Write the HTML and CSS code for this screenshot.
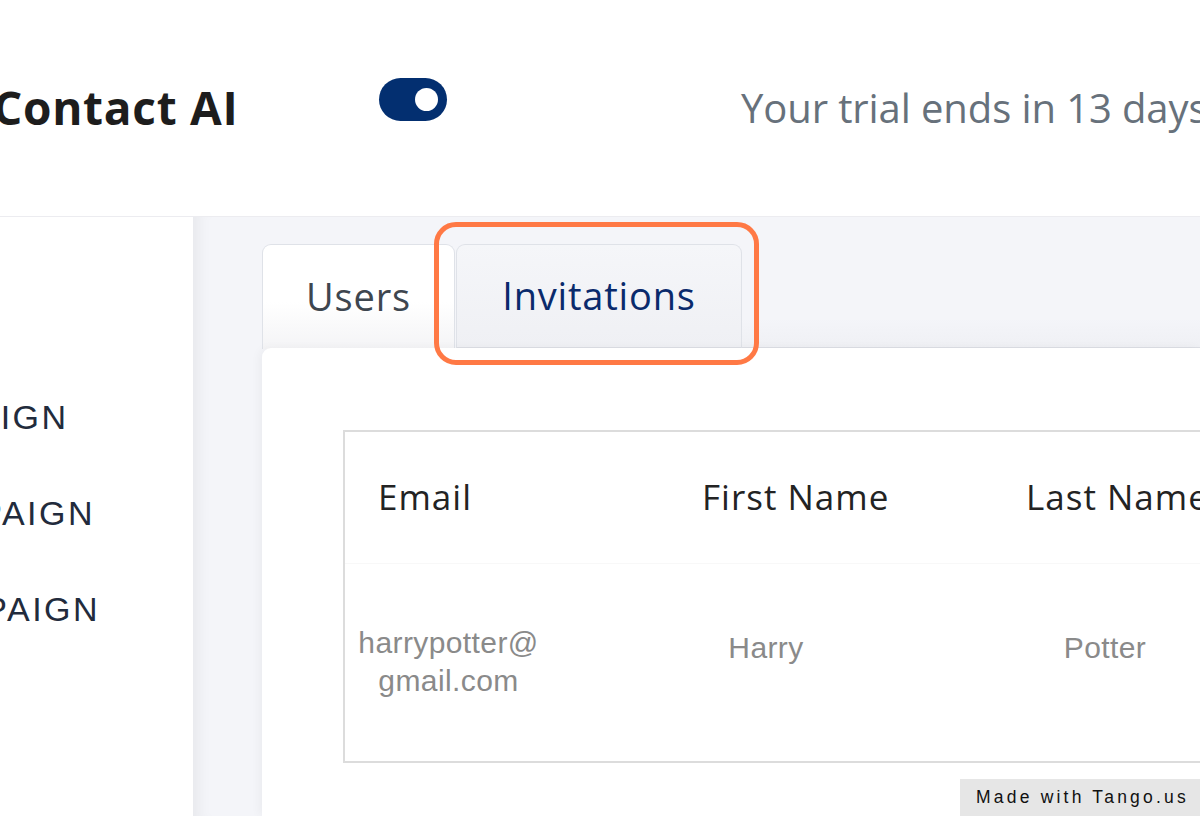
FILE: index.html
```html
<!DOCTYPE html>
<html lang="en">
<head>
<meta charset="utf-8">
<title>Contact AI - Invitations</title>
<link rel="stylesheet" href="styles.css">
</head>
<body>
<div class="page">
  <header class="topbar">
    <div class="brand">Contact AI</div>
    <div class="toggle"><span class="knob"></span></div>
    <div class="trial">Your trial ends in 13 days</div>
  </header>
  <div class="layout">
    <aside class="sidebar">
      <nav class="nav">
        <a class="nav-item">NEW CAMPAIGN</a>
        <a class="nav-item">EMAIL CAMPAIGN</a>
        <a class="nav-item">VOICE CAMPAIGN</a>
      </nav>
    </aside>
    <main class="main">
      <div class="tabs">
        <div class="tab tab-users">Users</div>
        <div class="tab tab-invitations">Invitations</div>
        <div class="tab-fill"></div>
      </div>
      <section class="card">
        <div class="table">
          <div class="thead">
            <div class="th">Email</div>
            <div class="th">First Name</div>
            <div class="th">Last Name</div>
          </div>
          <div class="trow">
            <div class="td td-email">harrypotter@<br>gmail.com</div>
            <div class="td td-name">Harry</div>
            <div class="td td-name">Potter</div>
          </div>
        </div>
      </section>
    </main>
  </div>
  <div class="highlight"></div>
  <div class="tango">Made with Tango.us</div>
</div>
</body>
</html>
```

FILE: styles.css
```css
* { box-sizing: border-box; }
html, body { margin: 0; padding: 0; }
body {
  width: 1200px;
  height: 816px;
  overflow: hidden;
  background: #ffffff;
  font-family: "Open Sans", "Liberation Sans", sans-serif;
}
.page {
  position: relative;
  width: 1200px;
  height: 816px;
  overflow: hidden;
  display: flex;
  flex-direction: column;
}
.topbar {
  height: 217px;
  flex: 0 0 217px;
  border-bottom: 1px solid #ececf0;
  display: flex;
  align-items: center;
  white-space: nowrap;
  padding-bottom: 2px;
}
.brand {
  flex: none;
  margin-left: -7px;
  width: 386px;
  font-size: 46px;
  font-weight: 700;
  color: #1d1d1d;
  letter-spacing: 0.7px;
}
.toggle {
  flex: none;
  width: 68px;
  height: 43px;
  border-radius: 22px;
  background: #032f70;
  display: flex;
  align-items: center;
  justify-content: flex-end;
  padding-right: 9px;
  margin-bottom: 16px;
}
.knob {
  width: 23px;
  height: 23px;
  border-radius: 50%;
  background: #ffffff;
}
.trial {
  flex: none;
  margin-left: 294px;
  font-size: 40px;
  color: #67717b;
  letter-spacing: -0.1px;
}
.layout {
  flex: 1;
  display: flex;
  min-height: 0;
}
.sidebar {
  width: 193px;
  flex: 0 0 193px;
  background: #ffffff;
  overflow: hidden;
  position: relative;
}
.nav {
  display: flex;
  flex-direction: column;
  gap: 60px;
  margin-left: -229px;
  padding-top: 182px;
  width: 440px;
}
.nav-item {
  display: block;
  white-space: nowrap;
  font-family: "Liberation Sans", Arial, sans-serif;
  font-size: 34px;
  line-height: 36px;
  letter-spacing: 2.5px;
  color: #222b3c;
}
.main {
  flex: 1;
  background: #f4f5f9;
  box-shadow: inset 16px 0 14px -10px rgba(0, 0, 0, 0.05);
  padding: 27px 0 0 69px;
  display: flex;
  flex-direction: column;
  min-width: 0;
}
.tabs {
  display: flex;
  align-items: flex-end;
  height: 105px;
  flex: 0 0 105px;
}
.tab {
  flex: none;
  height: 105px;
  display: flex;
  align-items: center;
  justify-content: center;
  font-size: 38px;
  letter-spacing: 0.8px;
  border: 1px solid #dfe2e8;
  border-radius: 9px 9px 0 0;
  padding-bottom: 2px;
}
.tab-users {
  width: 193px;
  color: #3e464f;
  background: linear-gradient(#ffffff 0%, #ffffff 55%, #f4f4f6 100%);
  border-bottom: none;
}
.tab-invitations {
  width: 286px;
  margin-left: 1px;
  color: #0a2a6c;
  background: linear-gradient(#f5f6f9, #eff0f4);
  border-bottom: 2px solid #dcdee4;
}
.tab-fill {
  flex: 1;
  height: 30px;
  background: linear-gradient(#f4f5f9, #eff0f4);
  border-bottom: 2px solid #dcdee4;
}
.card {
  flex: 1;
  background: #ffffff;
  border-radius: 9px 0 0 0;
  box-shadow: -3px 0 10px rgba(0, 0, 0, 0.04);
  padding: 82px 0 0 81px;
  margin-top: -1px;
}
.table {
  width: 1000px;
  height: 333px;
  border: 2px solid #dcdcdc;
  border-right: none;
  display: flex;
  flex-direction: column;
}
.thead {
  height: 132px;
  display: grid;
  grid-template-columns: 324px 324px 324px;
  align-items: center;
  padding-left: 33px;
  border-bottom: 1px solid #f8f8f8;
}
.th {
  font-size: 35px;
  letter-spacing: 1px;
  color: #232323;
  padding-bottom: 2px;
  white-space: nowrap;
}
.trow {
  flex: 1;
  display: grid;
  grid-template-columns: 207px 428px 250px;
}
.td {
  font-family: "Liberation Sans", Arial, sans-serif;
  font-size: 30px;
  letter-spacing: 0.4px;
  line-height: 38px;
  color: #8a8a8a;
  text-align: center;
}
.td-email { padding-top: 60px; }
.td-name { padding-top: 65px; }
.highlight {
  position: absolute;
  left: 434px;
  top: 222px;
  width: 325px;
  height: 143px;
  border: 5px solid #ff7945;
  border-radius: 22px;
}
.tango {
  position: absolute;
  left: 960px;
  top: 779px;
  width: 240px;
  height: 37px;
  background: #e6e6e6;
  display: flex;
  align-items: center;
  padding-left: 16px;
  font-family: "Liberation Sans", Arial, sans-serif;
  font-size: 17.5px;
  letter-spacing: 3.2px;
  color: #111111;
  white-space: nowrap;
}
```
